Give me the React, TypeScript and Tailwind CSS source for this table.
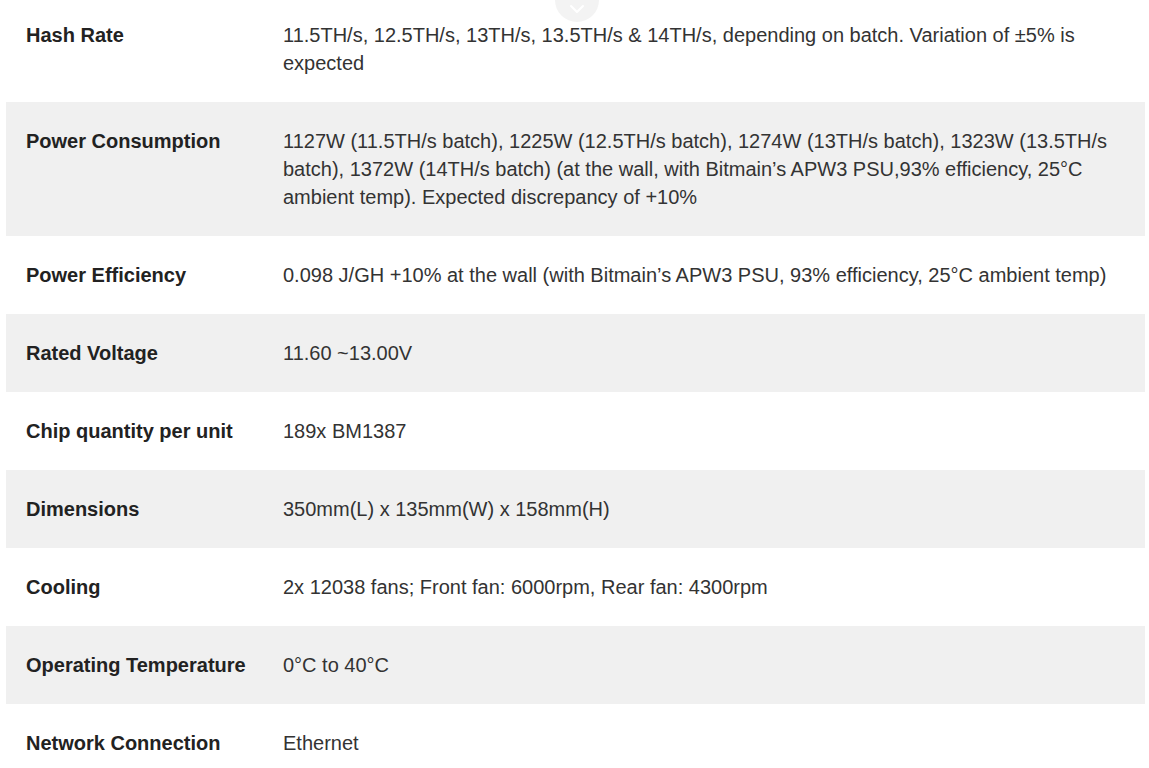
import React from "react";

const rows: [string, string][] = [
  ["Hash Rate", "11.5TH/s, 12.5TH/s, 13TH/s, 13.5TH/s & 14TH/s, depending on batch. Variation of ±5% is expected"],
  ["Power Consumption", "1127W (11.5TH/s batch), 1225W (12.5TH/s batch), 1274W (13TH/s batch), 1323W (13.5TH/s batch), 1372W (14TH/s batch) (at the wall, with Bitmain’s APW3 PSU,93% efficiency, 25°C ambient temp). Expected discrepancy of +10%"],
  ["Power Efficiency", "0.098 J/GH +10% at the wall (with Bitmain’s APW3 PSU, 93% efficiency, 25°C ambient temp)"],
  ["Rated Voltage", "11.60 ~13.00V"],
  ["Chip quantity per unit", "189x BM1387"],
  ["Dimensions", "350mm(L) x 135mm(W) x 158mm(H)"],
  ["Cooling", "2x 12038 fans; Front fan: 6000rpm, Rear fan: 4300rpm"],
  ["Operating Temperature", "0°C to 40°C"],
  ["Network Connection", "Ethernet"],
];

export default function App() {
  return (
    <div
      className="relative w-[1149px] h-[768px] overflow-hidden bg-white"
      style={{ fontFamily: '"Liberation Sans", Arial, sans-serif' }}
    >
      <div className="ml-[6px] mr-[4px] -mt-[4px] text-[20px] leading-[28px]">
        {rows.map(([k, v], i) => (
          <div
            key={k}
            className={`grid grid-cols-[257px_1fr] ${i % 2 === 1 ? "bg-[#f0f0f0]" : "bg-white"}`}
          >
            <div className="pl-5 pr-2 py-[25px] font-bold text-[#222] whitespace-nowrap">{k}</div>
            <div className="px-5 py-[25px] text-[#333]">{v}</div>
          </div>
        ))}
      </div>
      <div className="absolute left-[555px] top-[-22px] w-[44px] h-[44px] rounded-full bg-[#f3f3f3] flex items-end justify-center pb-[8px]">
        <svg width="16" height="10" viewBox="0 0 16 10" fill="none">
          <path d="M2 2 L8 8 L14 2" stroke="#ffffff" strokeWidth="2" strokeLinecap="round" strokeLinejoin="round" />
        </svg>
      </div>
    </div>
  );
}
